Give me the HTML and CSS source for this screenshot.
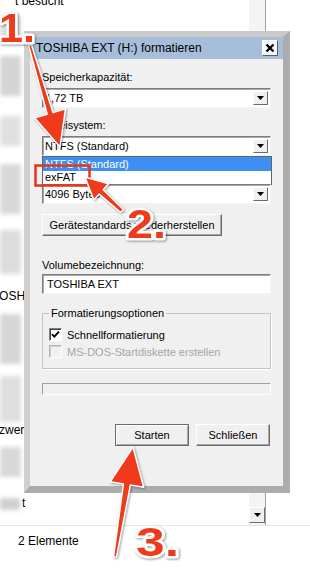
FILE: index.html
```html
<!DOCTYPE html>
<html lang="de">

<head>
  <meta charset="UTF-8" />
  <meta name="viewport" content="width=device-width, initial-scale=1.0" />
  <title>Formatieren</title>
  <link rel="stylesheet" href="styles.css">
</head>

<body>
  <div class="screen">

    <!-- explorer window behind the dialog -->
    <div class="explorer">
      <div class="main">
        <div class="nav">
          <div class="nav-row first">t besucht</div>
          <span class="smudge s1"></span>
          <span class="smudge s2"></span>
          <span class="smudge s3"></span>
          <span class="smudge s4"></span>
          <span class="smudge s5"></span>
          <div class="nav-row drive">TOSHIBA EXT</div>
          <span class="smudge s6"></span>
          <span class="smudge s7"></span>
          <div class="nav-row net">zwerk</div>
          <span class="smudge s8"></span>
          <div class="nav-row last"><span class="smudge s9"></span>t</div>
        </div>
        <div class="vscroll">
          <span class="scroll-btn">
            <svg width="7" height="4" viewBox="0 0 7 4"><path d="M0 0h7L3.5 4z" fill="#000" /></svg>
          </span>
        </div>
      </div>
      <div class="status">2 Elemente</div>
    </div>

    <!-- format dialog -->
    <div class="dialog">
      <div class="titlebar">
        <span class="title">TOSHIBA EXT (H:) formatieren</span>
        <span class="close">
          <svg width="10" height="10" viewBox="0 0 10 10"><path d="M1.5 1.5l7 7M8.5 1.5l-7 7" stroke="#000" stroke-width="2.4" /></svg>
        </span>
      </div>
      <div class="dlg-body">
        <div class="field-label">Speicherkapazität:</div>
        <div class="combo">
          <span class="combo-text">1,72 TB</span>
          <span class="combo-btn"><svg width="7" height="4" viewBox="0 0 7 4"><path d="M0 0h7L3.5 4z" fill="#000" /></svg></span>
        </div>

        <div class="field-label">Dateisystem:</div>
        <div class="combo-wrap">
          <div class="combo">
            <span class="combo-text">NTFS (Standard)</span>
            <span class="combo-btn"><svg width="7" height="4" viewBox="0 0 7 4"><path d="M0 0h7L3.5 4z" fill="#000" /></svg></span>
          </div>
          <ul class="droplist">
            <li class="sel">NTFS (Standard)</li>
            <li>exFAT</li>
          </ul>
        </div>

        <div class="field-label">Größe der Zuordnungseinheiten:</div>
        <div class="combo">
          <span class="combo-text">4096 Bytes</span>
          <span class="combo-btn"><svg width="7" height="4" viewBox="0 0 7 4"><path d="M0 0h7L3.5 4z" fill="#000" /></svg></span>
        </div>

        <button class="btn restore" type="button">Gerätestandards wiederherstellen</button>

        <div class="field-label vol">Volumebezeichnung:</div>
        <div class="textbox">TOSHIBA EXT</div>

        <fieldset class="options">
          <legend>Formatierungsoptionen</legend>
          <div class="check-row">
            <span class="check on">
              <svg width="9" height="9" viewBox="0 0 9 9"><path d="M1 4.2l2.3 2.4L8 1.6" stroke="#000" stroke-width="1.8" fill="none" /></svg>
            </span>
            Schnellformatierung
          </div>
          <div class="check-row off">
            <span class="check"></span>
            MS-DOS-Startdiskette erstellen
          </div>
        </fieldset>

        <div class="progress"></div>

        <div class="actions">
          <button class="btn default" type="button">Starten</button>
          <button class="btn" type="button">Schließen</button>
        </div>
      </div>
    </div>

    <!-- red annotations drawn over the screenshot -->
    <svg class="marks" width="310" height="575" viewBox="0 0 310 575">
      <rect class="redbox" x="35.5" y="165.5" width="54" height="20" />
      <g class="arrow">
        <polygon points="31.4,44.6 53,112.6 65.5,108.9 60,147 34.7,117.9 47.2,114.2 28.6,45.4" />
        <polygon points="123.4,209.5 103.2,189.7 108.6,183.8 85,177 93.8,200 99.2,194.1 120.6,212.5" />
        <polygon points="116.5,557.2 130.4,485.1 143.7,487.2 133,447 110.1,481.8 123.4,483.9 113.5,556.8" />
      </g>
      <g class="num">
        <text x="-1" y="42" textLength="36" lengthAdjust="spacingAndGlyphs">1.</text>
        <text x="127" y="238" textLength="39" lengthAdjust="spacingAndGlyphs">2.</text>
        <text x="136" y="556" textLength="43" lengthAdjust="spacingAndGlyphs">3.</text>
      </g>
    </svg>

  </div>
</body>

</html>
```

FILE: styles.css
```css
* {
  box-sizing: border-box;
}

body {
  margin: 0;
  background: #fff;
  font-family: "Liberation Sans", Arial, sans-serif;
  font-size: 11px;
  color: #000;
}

.screen {
  position: relative;
  width: 310px;
  height: 575px;
  overflow: hidden;
}

/* explorer in the background */
.explorer {
  display: flex;
  flex-direction: column;
  height: 575px;
}

.main {
  display: flex;
  height: 526px;
  border-bottom: 1px solid #e6e6e6;
}

.nav {
  width: 249px;
  display: flex;
  flex-direction: column;
  overflow: hidden;
  font-size: 12px;
}

.nav-row {
  height: 17px;
  line-height: 17px;
  white-space: nowrap;
}

.nav-row.first {
  margin-top: -7px;
  padding-left: 15px;
}

.nav-row.drive {
  height: 20px;
  line-height: 20px;
  text-indent: -8px;
  background: #fff;
}

.nav-row.net {
  text-indent: -1px;
}

.nav-row.last {
  display: flex;
  align-items: center;
  gap: 2px;
}

.smudge {
  display: block;
  width: 21px;
  background: #dadada;
  filter: blur(2px);
}

.s1 { height: 26px; margin-top: 6px; background: #dedede; }
.s2 { height: 40px; margin-top: 14px; background: #d4d4d4; }
.s3 { height: 30px; margin-top: 20px; background: #e0e0e0; }
.s4 { height: 50px; margin-top: 18px; background: #d8d8d8; }
.s5 { height: 44px; margin-top: 16px; margin-bottom: 12px; background: #dcdcdc; }
.s6 { height: 50px; margin-top: 8px; background: #d6d6d6; }
.s7 { height: 46px; margin-top: 12px; margin-bottom: 0; background: #dedede; }
.s8 { height: 30px; margin-top: 8px; margin-bottom: 18px; background: #d8d8d8; }
.s9 { height: 12px; width: 20px; background: #d0d0d0; }

.vscroll {
  width: 17px;
  background: #f4f4f4;
  border-right: 1px solid #a0a0a0;
  display: flex;
  flex-direction: column;
  justify-content: flex-end;
  padding-bottom: 2px;
}

.scroll-btn {
  width: 16px;
  height: 16px;
  display: flex;
  align-items: center;
  justify-content: center;
  background: #f0f0f0;
  border: 1px solid;
  border-color: #fff #6e6e6e #6e6e6e #fff;
}

.status {
  padding: 8px 0 0 18px;
  font-size: 12px;
  line-height: 14px;
}

/* dialog window */
.dialog {
  position: absolute;
  left: 24px;
  top: 31px;
  width: 266px;
  height: 462px;
  background: #f0f0f0;
  border-style: solid;
  border-width: 6px 7px 7px 6px;
  border-color: #c9c9c9 #acacac #acacac #d0d0d0;
}

.titlebar {
  display: flex;
  align-items: center;
  justify-content: space-between;
  height: 22px;
  margin-left: 3px;
  padding: 0 5px 0 3px;
  background: #a7bedb;
}

.title {
  font-size: 12px;
}

.close {
  width: 16px;
  height: 16px;
  display: flex;
  align-items: center;
  justify-content: center;
  background: #f6f6f6;
  border: 1px solid;
  border-color: #fff #5e5e5e #5e5e5e #fff;
}

.dlg-body {
  padding: 11px 12px 0 12px;
}

.field-label {
  height: 14px;
  line-height: 14px;
  margin-bottom: 4px;
  white-space: nowrap;
}

.field-label.vol {
  margin-bottom: 2px;
}

.combo {
  position: relative;
  height: 20px;
  margin-bottom: 10px;
  display: flex;
  align-items: center;
  justify-content: space-between;
  padding: 0 2px 0 2px;
  background: #fff;
  border: 1px solid;
  border-color: #7d7d7d #f4f4f4 #f4f4f4 #7d7d7d;
  box-shadow: inset 1px 1px #a8a8a8;
}

.combo-btn {
  width: 15px;
  height: 14px;
  display: flex;
  align-items: center;
  justify-content: center;
  background: #f0f0f0;
  border: 1px solid;
  border-color: #fff #6a6a6a #6a6a6a #fff;
}

.combo-wrap {
  position: relative;
}

.droplist {
  position: absolute;
  top: 20px;
  left: 0;
  width: 230px;
  margin: 0;
  padding: 0;
  list-style: none;
  background: #fff;
  border: 1px solid #646464;
}

.droplist li {
  height: 13px;
  line-height: 13px;
  padding-left: 2px;
}

.droplist li.sel {
  height: 14px;
  line-height: 14px;
  background: #3d8ff2;
  color: #fff;
}

.btn {
  height: 22px;
  padding: 0;
  font-family: inherit;
  font-size: 11px;
  color: #000;
  background: #f0f0f0;
  border: 1px solid;
  border-color: #fff #6b6b6b #6b6b6b #fff;
  box-shadow: inset -1px -1px #a8a8a8;
}

.btn.restore {
  display: block;
  width: 180px;
  margin-top: 10px;
  margin-bottom: 22px;
}

.btn.default {
  border-color: #6b6b6b;
  box-shadow: inset 1px 1px #fff, inset -1px -1px #a8a8a8;
}

.textbox {
  height: 20px;
  line-height: 18px;
  padding-left: 4px;
  background: #fff;
  border: 1px solid;
  border-color: #7d7d7d #f4f4f4 #f4f4f4 #7d7d7d;
  box-shadow: inset 1px 1px #a8a8a8;
}

.options {
  margin: 12px 0 0 0;
  padding: 6px 6px 8px 6px;
  border: 1px solid #c4c4c4;
  box-shadow: 1px 1px #fff;
}

.options legend {
  padding: 0 2px;
  line-height: 14px;
}

.check-row {
  height: 17px;
  display: flex;
  align-items: center;
  gap: 5px;
}

.check {
  width: 13px;
  height: 13px;
  display: flex;
  align-items: center;
  justify-content: center;
  background: #fff;
  border: 1px solid;
  border-color: #808080 #fff #fff #808080;
  box-shadow: inset 1px 1px #404040;
}

.check-row.off {
  color: #a6a6a6;
}

.check-row.off .check {
  background: #f0f0f0;
  border-color: #b4b4b4 #fff #fff #b4b4b4;
  box-shadow: inset 1px 1px #d0d0d0;
}

.progress {
  height: 12px;
  margin-top: 14px;
  border: 1px solid;
  border-color: #a0a0a0 #fff #fff #a0a0a0;
}

.actions {
  display: flex;
  justify-content: flex-end;
  gap: 7px;
  margin-top: 29px;
  padding-right: 1px;
}

.actions .btn {
  width: 74px;
}

/* annotations */
.marks {
  position: absolute;
  left: 0;
  top: 0;
  pointer-events: none;
}

.redbox {
  fill: none;
  stroke: #e8321a;
  stroke-width: 2.5;
}

.arrow {
  fill: #ef3b1c;
  stroke: #fff;
  stroke-width: 1.5;
  stroke-linejoin: round;
  filter: drop-shadow(1px 1px 1px rgba(0, 0, 0, 0.35));
}

.num text {
  font-family: "Liberation Sans", Arial, sans-serif;
  font-weight: bold;
  font-size: 40px;
  fill: #ef3b1c;
  stroke: #fff;
  stroke-width: 5px;
  stroke-linejoin: round;
  paint-order: stroke;
  filter: drop-shadow(1px 1px 1px rgba(0, 0, 0, 0.4));
}
```
